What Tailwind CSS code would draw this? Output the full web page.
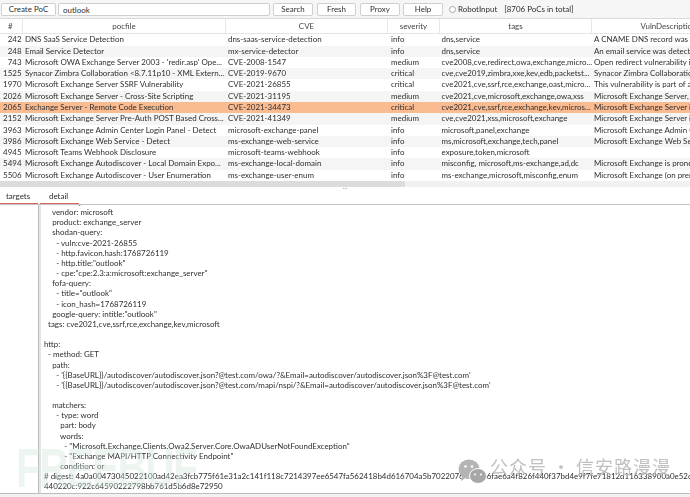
<!DOCTYPE html>
<html lang="en">
<head>
  <meta charset="UTF-8">
  <title>PoC</title>
  <script src="https://cdn.jsdelivr.net/npm/@tailwindcss/browser@4"></script>
</head>
<body class="w-[690px] h-[497px] overflow-hidden bg-white text-[#2f2f2f] text-[7.95px] font-['Lato','Noto_Sans',sans-serif]">
  <div class="relative flex flex-col h-[497px] overflow-hidden blur-[0.3px]">

    <!-- toolbar -->
    <div class="flex items-center h-[18px] pl-[1px] pt-[1px] bg-[#f6f6f6] shrink-0">
      <button class="w-[55px] h-[13px] mr-[2px] bg-white border border-[#cfcfcf] rounded-[2px] text-center">Create PoC</button>
      <input value="outlook" class="w-[212px] h-[13px] mr-[3px] px-[4px] bg-white border border-[#cfcfcf] rounded-[2px] text-[7.95px]">
      <button class="w-[40px] h-[13px] mr-[4px] bg-white border border-[#cfcfcf] rounded-[2px]">Search</button>
      <button class="w-[39px] h-[13px] mr-[4px] bg-white border border-[#cfcfcf] rounded-[2px]">Fresh</button>
      <button class="w-[40px] h-[13px] mr-[3px] bg-white border border-[#cfcfcf] rounded-[2px]">Proxy</button>
      <button class="w-[40px] h-[13px] mr-[6px] bg-white border border-[#cfcfcf] rounded-[2px]">Help</button>
      <span class="w-[7px] h-[7px] mr-[2px] rounded-full border border-[#a8a8a8] bg-white"></span>
      <span class="mr-[7px]">RobotInput</span>
      <span>[8706 PoCs in total]</span>
    </div>

    <!-- poc table -->
    <div class="h-[163px] shrink-0 overflow-hidden border-t border-[#d9d9d9]">
      <div class="flex w-[800px] h-[15.4px] items-center border-b border-[#e4e4e4] text-[#444] leading-[15px]">
        <div class="w-[23px] pl-[8px] h-full border-r border-[#e8e8e8]">#</div>
        <div class="w-[203px] text-center h-full border-r border-[#e8e8e8]">pocfile</div>
        <div class="w-[162px] text-center h-full border-r border-[#e8e8e8]">CVE</div>
        <div class="w-[52px] text-center h-full border-r border-[#e8e8e8]">severity</div>
        <div class="w-[152px] text-center h-full border-r border-[#e8e8e8]">tags</div>
        <div class="w-[153px] text-center h-full">VulnDescription</div>
      </div>
      <div id="rows"></div>
    </div>

    <!-- horizontal scrollbar -->
    <div class="h-[6px] bg-[#f1f1f1] shrink-0"><div class="w-[405px] h-full bg-[#dcdcdc]"></div></div>

    <!-- splitter -->
    <div class="h-[3px] flex items-center justify-center text-[#999] leading-none shrink-0"><span class="text-[6px] -mt-[2px]">···</span></div>

    <!-- tabs -->
    <div class="flex h-[15px] border-b border-[#c4c4c4] shrink-0">
      <div class="w-[38px] border-b-[1.5px] border-[#d9645a] pl-[6px] pt-[1px]">targets</div>
      <div class="w-[39px] ml-[2px] border-b-[1.5px] border-[#d9645a] pl-[9px] pt-[1px]">detail</div>
    </div>

    <!-- lower pane -->
    <div class="flex flex-1 min-h-0">
      <div class="w-[39px] shrink-0 bg-white border-r border-[#bdbdbd]"></div>
      <div class="w-[1.5px] shrink-0 bg-[#e4e4e4]"></div>
      <div class="flex-1 min-w-0 overflow-hidden">
        <pre class="-mt-[8px] pl-[3.5px] leading-[10.15px] text-[7.95px] text-[#2f2f2f] font-['Lato','Noto_Sans',sans-serif]">    max-request: 1
    vendor: microsoft
    product: exchange_server
    shodan-query:
      - vuln:cve-2021-26855
      - http.favicon.hash:1768726119
      - http.title:"outlook"
      - cpe:"cpe:2.3:a:microsoft:exchange_server"
    fofa-query:
      - title="outlook"
      - icon_hash=1768726119
    google-query: intitle:"outlook"
  tags: cve2021,cve,ssrf,rce,exchange,kev,microsoft

http:
  - method: GET
    path:
      - '{{BaseURL}}/autodiscover/autodiscover.json?@test.com/owa/?&amp;Email=autodiscover/autodiscover.json%3F@test.com'
      - '{{BaseURL}}/autodiscover/autodiscover.json?@test.com/mapi/nspi/?&amp;Email=autodiscover/autodiscover.json%3F@test.com'

    matchers:
      - type: word
        part: body
        words:
          - "Microsoft.Exchange.Clients.Owa2.Server.Core.OwaADUserNotFoundException"
          - "Exchange MAPI/HTTP Connectivity Endpoint"
        condition: or
# digest: 4a0a00473045022100ad42ea3fcb775f61e31a2c141f118c7214397ee6547fa562418b4d616704a5b7022076434866fae6a4f826f440f37bd4e9f7fe71812d116338900a0e52caf
440220c:922c64590222798bb761d5b6d8e72950</pre>
      </div>
    </div>

    <!-- bottom edge -->
    <div class="h-[4px] shrink-0 border-t-[1.5px] border-[#bdbdbd] bg-[#f2f2f2]"></div>

    <!-- watermarks lying over the page -->
    <div class="absolute left-[16px] top-[440px] origin-left scale-x-[0.72] text-[56px] leading-none font-bold tracking-[-2px] text-[#cfe5da]/40 font-['Liberation_Sans',sans-serif] pointer-events-none">FREEBUF</div>
    <svg class="absolute left-[458px] top-[459px]" width="30" height="26" viewBox="0 0 30 26">
      <ellipse cx="11" cy="10" rx="10.5" ry="9.5" fill="#b4b4b4"/>
      <path d="M4 16 L3 22 L9 18 Z" fill="#b4b4b4"/>
      <ellipse cx="20" cy="17" rx="8.5" ry="7.5" fill="#a8a8a8" stroke="#fff" stroke-width="1"/>
      <circle cx="7.5" cy="7.5" r="1.3" fill="#fff"/>
      <circle cx="14" cy="7.5" r="1.3" fill="#fff"/>
      <circle cx="17" cy="15.5" r="1" fill="#fff"/>
      <circle cx="23" cy="15.5" r="1" fill="#fff"/>
    </svg>
    <div class="absolute left-[490px] top-[454px] text-[18px] leading-[24px] tracking-[1px] whitespace-pre text-[#b9b9b9]/90 font-['Noto_Sans_CJK_SC',sans-serif] pointer-events-none">公众号 · 信安路漫漫</div>
  </div>

  <script>
    const pocs = [
      ["242", "DNS SaaS Service Detection", "dns-saas-service-detection", "info", "dns,service", "A CNAME DNS record was detected"],
      ["248", "Email Service Detector", "mx-service-detector", "info", "dns,service", "An email service was detected"],
      ["743", "Microsoft OWA Exchange Server 2003 - 'redir.asp' Ope...", "CVE-2008-1547", "medium", "cve2008,cve,redirect,owa,exchange,micro...", "Open redirect vulnerability in"],
      ["1525", "Synacor Zimbra Collaboration <8.7.11p10 - XML Extern...", "CVE-2019-9670", "critical", "cve,cve2019,zimbra,xxe,kev,edb,packetst...", "Synacor Zimbra Collaboration"],
      ["1970", "Microsoft Exchange Server SSRF Vulnerability", "CVE-2021-26855", "critical", "cve2021,cve,ssrf,rce,exchange,oast,micro...", "This vulnerability is part of an"],
      ["2026", "Microsoft Exchange Server - Cross-Site Scripting", "CVE-2021-31195", "medium", "cve2021,cve,microsoft,exchange,owa,xss", "Microsoft Exchange Server, Exchange"],
      ["2065", "Exchange Server - Remote Code Execution", "CVE-2021-34473", "critical", "cve2021,cve,ssrf,rce,exchange,kev,micros...", "Microsoft Exchange Server is"],
      ["2152", "Microsoft Exchange Server Pre-Auth POST Based Cross...", "CVE-2021-41349", "medium", "cve,cve2021,xss,microsoft,exchange", "Microsoft Exchange Server is"],
      ["3963", "Microsoft Exchange Admin Center Login Panel - Detect", "microsoft-exchange-panel", "info", "microsoft,panel,exchange", "Microsoft Exchange Admin Center"],
      ["3986", "Microsoft Exchange Web Service - Detect", "ms-exchange-web-service", "info", "ms,microsoft,exchange,tech,panel", "Microsoft Exchange Web Service"],
      ["4945", "Microsoft Teams Webhook Disclosure", "microsoft-teams-webhook", "info", "exposure,token,microsoft", ""],
      ["5494", "Microsoft Exchange Autodiscover - Local Domain Expo...", "ms-exchange-local-domain", "info", "misconfig, microsoft,ms-exchange,ad,dc", "Microsoft Exchange is prone to"],
      ["5506", "Microsoft Exchange Autodiscover - User Enumeration", "ms-exchange-user-enum", "info", "ms-exchange,microsoft,misconfig,enum", "Microsoft Exchange (on premises)"],
    ];

    const box = document.getElementById("rows");
    pocs.forEach((p, i) => {
      const row = document.createElement("div");
      const bg = p[0] === "2065" ? "bg-[#fbbb90]" : (i % 2 === 1 ? "bg-[#f5f5f5]" : "bg-white");
      row.className = "flex w-[800px] h-[11.27px] leading-[11.27px] whitespace-nowrap overflow-hidden " + bg;
      const cell = (cls, txt) => {
        const d = document.createElement("div");
        d.className = cls;
        d.textContent = txt;
        row.appendChild(d);
      };
      cell("w-[21.5px] text-right", p[0]);
      cell("w-[206.5px] pl-[3.5px]", p[1]);
      cell("w-[163px]", p[2]);
      cell("w-[50.5px]", p[3]);
      cell("w-[152.5px]", p[4]);
      cell("w-[206px]", p[5]);
      box.appendChild(row);
    });
  </script>
</body>
</html>
